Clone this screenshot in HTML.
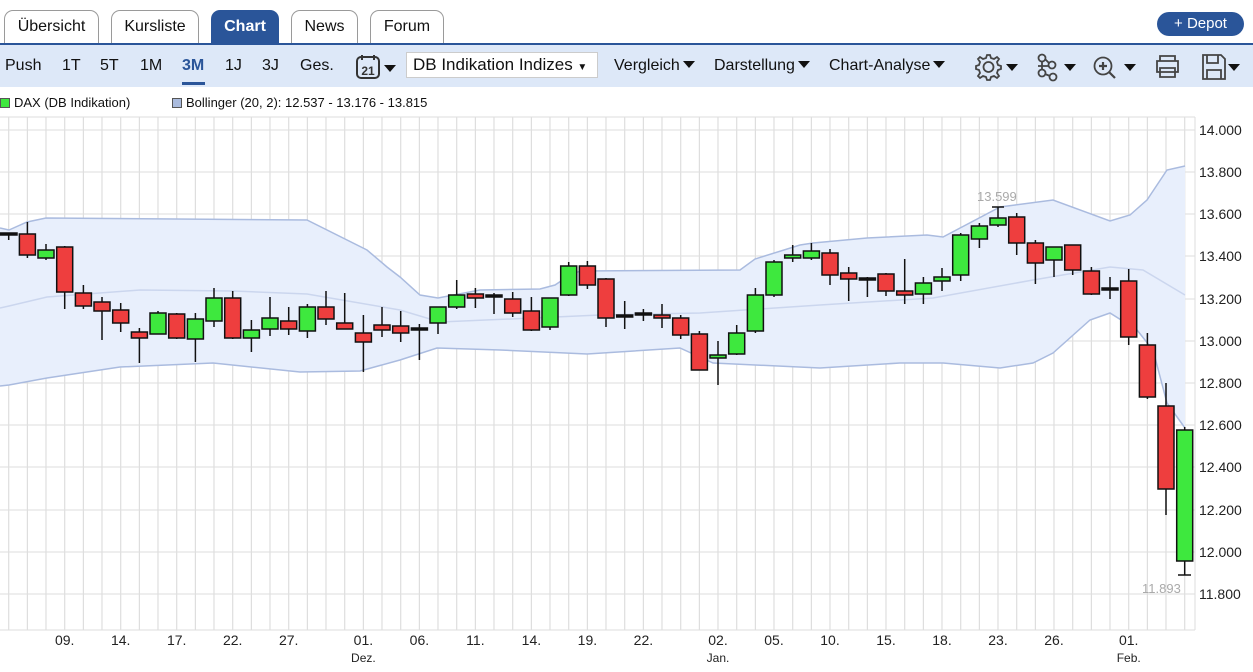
<!DOCTYPE html>
<html><head><meta charset="utf-8"><style>
*{margin:0;padding:0;box-sizing:border-box}
body{width:1253px;height:672px;background:#fff;font-family:"Liberation Sans",sans-serif;position:relative;overflow:hidden;color:#111}
.tab{position:absolute;top:10px;height:34px;border:1px solid #9a9a9a;border-bottom:none;border-radius:9px 9px 0 0;font-size:16px;text-align:center;line-height:32px;background:#fff}
.tab.on{background:#2a5599;color:#fff;font-weight:bold;border-color:#2a5599}
#bar{position:absolute;top:43px;left:0;width:1253px;height:44px;background:#dde8f8;border-top:2px solid #2a5599}
.t{position:absolute;top:12px;font-size:16px;color:#111}
.arr{display:inline-block;width:0;height:0;border-left:6px solid transparent;border-right:6px solid transparent;border-top:7px solid #111;margin-left:3px;vertical-align:2px}
#dep{position:absolute;left:1157px;top:12px;width:87px;height:24px;border-radius:12px;background:#2a5599;color:#fff;font-size:15px;text-align:center;line-height:24px}
.lg{position:absolute;top:95px;font-size:13px}
.sq{display:inline-block;width:10px;height:10px;border:1px solid #555;margin-right:4px;vertical-align:-1px}
</style></head><body>
<div class="tab" style="left:4px;width:95px">Übersicht</div>
<div class="tab" style="left:111px;width:88px">Kursliste</div>
<div class="tab on" style="left:211px;width:68px">Chart</div>
<div class="tab" style="left:291px;width:67px">News</div>
<div class="tab" style="left:370px;width:74px">Forum</div>
<div id="dep">+ Depot</div>
<div id="bar">
<span class="t" style="left:5px">Push</span>
<span class="t" style="left:62px">1T</span>
<span class="t" style="left:100px">5T</span>
<span class="t" style="left:140px">1M</span>
<span class="t" style="left:182px;color:#2a5599;font-weight:bold">3M</span>
<div style="position:absolute;left:182px;top:37px;width:23px;height:3px;background:#2a5599"></div>
<span class="t" style="left:225px">1J</span>
<span class="t" style="left:262px">3J</span>
<span class="t" style="left:300px">Ges.</span>
<svg style="position:absolute;left:355px;top:8px" width="42" height="28"><rect x="2" y="4" width="22" height="21" rx="4" fill="none" stroke="#333" stroke-width="2"/><line x1="7" y1="2" x2="7" y2="7" stroke="#333" stroke-width="2"/><line x1="19" y1="2" x2="19" y2="7" stroke="#333" stroke-width="2"/><text x="13" y="22" font-size="12" font-weight="bold" text-anchor="middle" font-family="Liberation Sans" fill="#333">21</text><path d="M29 12h12l-6 7z" fill="#111"/></svg>
<div style="position:absolute;left:406px;top:7px;width:192px;height:26px;background:#fff;border:1px solid #ccc;font-size:17px;line-height:24px;padding-left:6px">DB Indikation Indizes <span style="font-size:10px">&#9660;</span></div>
<span class="t" style="left:614px">Vergleich<span class="arr"></span></span>
<span class="t" style="left:714px">Darstellung<span class="arr"></span></span>
<span class="t" style="left:829px">Chart-Analyse<span class="arr"></span></span>
<svg style="position:absolute;left:970px;top:4px" width="280" height="34" fill="none" stroke="#444" stroke-width="1.8">
<path d="M17 6l3 0 1 3 3 1 3-2 2 2-2 3 1 3 3 1v3l-3 1-1 3 2 3-2 2-3-2-3 1-1 3h-3l-1-3-3-1-3 2-2-2 2-3-1-3-3-1v-3l3-1 1-3-2-3 2-2 3 2 3-1z"/><circle cx="18.5" cy="18" r="5"/>
<path d="M36 15h12l-6 7z" fill="#111" stroke="none"/>
<circle cx="72" cy="9" r="3.5"/><circle cx="82" cy="16" r="3.5"/><circle cx="72" cy="24" r="3.5"/><circle cx="83" cy="28" r="3.5"/><path d="M72 12v9M75 10l4 4M75 25l5 2M68 17h11"/>
<path d="M94 15h12l-6 7z" fill="#111" stroke="none"/>
<circle cx="133" cy="17" r="8.5"/><path d="M139 23l6 6M129 17h8M133 13v8" stroke-width="2.2"/>
<path d="M154 15h12l-6 7z" fill="#111" stroke="none"/>
<path d="M190 12v-5h15v5M187 12h21v11h-21zM190 19h15v9h-15z"/>
<path d="M233 6h18l4 4v20h-22zM237 6v8h11V6M237 30v-9h14v9"/>
<path d="M258 15h12l-6 7z" fill="#111" stroke="none"/>
</svg>
</div>
<div class="lg" style="left:0"><span class="sq" style="background:#3ee83e"></span>DAX (DB Indikation)</div>
<div class="lg" style="left:172px"><span class="sq" style="background:#aabbdd"></span>Bollinger (20, 2): 12.537 - 13.176 - 13.815</div>
<svg style="position:absolute;left:0;top:0" width="1253" height="672">
<g stroke="#dedede" stroke-width="1">
<line x1="0" y1="117" x2="1195" y2="117"/>
<line x1="0" y1="130" x2="1195" y2="130"/><line x1="0" y1="172" x2="1195" y2="172"/><line x1="0" y1="214" x2="1195" y2="214"/><line x1="0" y1="256" x2="1195" y2="256"/><line x1="0" y1="299" x2="1195" y2="299"/><line x1="0" y1="341" x2="1195" y2="341"/><line x1="0" y1="383" x2="1195" y2="383"/><line x1="0" y1="425" x2="1195" y2="425"/><line x1="0" y1="467" x2="1195" y2="467"/><line x1="0" y1="510" x2="1195" y2="510"/><line x1="0" y1="552" x2="1195" y2="552"/><line x1="0" y1="594" x2="1195" y2="594"/>
<line x1="0" y1="630" x2="1195" y2="630"/>
<line x1="1195" y1="117" x2="1195" y2="630"/>
</g>
<g stroke="#dedede" stroke-width="1.2">
<line x1="8.7" y1="117" x2="8.7" y2="630"/><line x1="27.4" y1="117" x2="27.4" y2="630"/><line x1="46" y1="117" x2="46" y2="630"/><line x1="64.7" y1="117" x2="64.7" y2="630"/><line x1="83.4" y1="117" x2="83.4" y2="630"/><line x1="102" y1="117" x2="102" y2="630"/><line x1="120.7" y1="117" x2="120.7" y2="630"/><line x1="139.4" y1="117" x2="139.4" y2="630"/><line x1="158" y1="117" x2="158" y2="630"/><line x1="176.7" y1="117" x2="176.7" y2="630"/><line x1="195.4" y1="117" x2="195.4" y2="630"/><line x1="214" y1="117" x2="214" y2="630"/><line x1="232.7" y1="117" x2="232.7" y2="630"/><line x1="251.4" y1="117" x2="251.4" y2="630"/><line x1="270" y1="117" x2="270" y2="630"/><line x1="288.7" y1="117" x2="288.7" y2="630"/><line x1="307.4" y1="117" x2="307.4" y2="630"/><line x1="326" y1="117" x2="326" y2="630"/><line x1="344.7" y1="117" x2="344.7" y2="630"/><line x1="363.4" y1="117" x2="363.4" y2="630"/><line x1="382" y1="117" x2="382" y2="630"/><line x1="400.7" y1="117" x2="400.7" y2="630"/><line x1="419.4" y1="117" x2="419.4" y2="630"/><line x1="438" y1="117" x2="438" y2="630"/><line x1="456.7" y1="117" x2="456.7" y2="630"/><line x1="475.4" y1="117" x2="475.4" y2="630"/><line x1="494" y1="117" x2="494" y2="630"/><line x1="512.7" y1="117" x2="512.7" y2="630"/><line x1="531.4" y1="117" x2="531.4" y2="630"/><line x1="550" y1="117" x2="550" y2="630"/><line x1="568.7" y1="117" x2="568.7" y2="630"/><line x1="587.4" y1="117" x2="587.4" y2="630"/><line x1="606" y1="117" x2="606" y2="630"/><line x1="624.7" y1="117" x2="624.7" y2="630"/><line x1="643.4" y1="117" x2="643.4" y2="630"/><line x1="662" y1="117" x2="662" y2="630"/><line x1="680.7" y1="117" x2="680.7" y2="630"/><line x1="699.4" y1="117" x2="699.4" y2="630"/><line x1="718" y1="117" x2="718" y2="630"/><line x1="736.7" y1="117" x2="736.7" y2="630"/><line x1="755.4" y1="117" x2="755.4" y2="630"/><line x1="774" y1="117" x2="774" y2="630"/><line x1="792.7" y1="117" x2="792.7" y2="630"/><line x1="811.4" y1="117" x2="811.4" y2="630"/><line x1="830" y1="117" x2="830" y2="630"/><line x1="848.7" y1="117" x2="848.7" y2="630"/><line x1="867.4" y1="117" x2="867.4" y2="630"/><line x1="886" y1="117" x2="886" y2="630"/><line x1="904.7" y1="117" x2="904.7" y2="630"/><line x1="923.4" y1="117" x2="923.4" y2="630"/><line x1="942" y1="117" x2="942" y2="630"/><line x1="960.7" y1="117" x2="960.7" y2="630"/><line x1="979.4" y1="117" x2="979.4" y2="630"/><line x1="998" y1="117" x2="998" y2="630"/><line x1="1016.7" y1="117" x2="1016.7" y2="630"/><line x1="1035.4" y1="117" x2="1035.4" y2="630"/><line x1="1054" y1="117" x2="1054" y2="630"/><line x1="1072.7" y1="117" x2="1072.7" y2="630"/><line x1="1091.4" y1="117" x2="1091.4" y2="630"/><line x1="1110" y1="117" x2="1110" y2="630"/><line x1="1128.7" y1="117" x2="1128.7" y2="630"/><line x1="1147.4" y1="117" x2="1147.4" y2="630"/><line x1="1166" y1="117" x2="1166" y2="630"/><line x1="1184.7" y1="117" x2="1184.7" y2="630"/>
</g>
<path d="M0 228 L9 230 L27 222 L46 218 L307 220 L367 250 L387 267 L400 277 L420 295 L438 298 L480 290 L540 289 L555 285 L567 277 L580 271 L740 270 L755 259 L800 245 L813 243 L867 238 L927 235 L943 237 L1000 207 L1053 200 L1110 221 L1130 215 L1147 200 L1167 170 L1185 166 L1185 428 L1167 403 L1153 350 L1137 330 L1110 313 L1090 320 L1053 353 L1033 363 L1000 368 L943 363 L900 363 L830 368 L820 368 L713 363 L680 348 L587 354 L500 350 L437 348 L400 360 L360 371 L300 372 L213 363 L120 367 L47 378 L9 385 L0 386 Z" fill="#e8effc" stroke="none"/>
<g fill="none" stroke="#aabbdf" stroke-width="1.5">
<path d="M0 228 L9 230 L27 222 L46 218 L307 220 L367 250 L387 267 L400 277 L420 295 L438 298 L480 290 L540 289 L555 285 L567 277 L580 271 L740 270 L755 259 L800 245 L813 243 L867 238 L927 235 L943 237 L1000 207 L1053 200 L1110 221 L1130 215 L1147 200 L1167 170 L1185 166"/>
<path d="M0 386 L9 385 L47 378 L120 367 L213 363 L300 372 L360 371 L400 360 L437 348 L500 350 L587 354 L680 348 L713 363 L820 368 L900 363 L943 363 L1000 368 L1033 363 L1053 353 L1090 320 L1110 313 L1137 330 L1153 350 L1167 403 L1185 428"/>
<path d="M0 308 L9 306 L47 297 L140 290 L233 291 L307 294 L400 310 L440 322 L533 318 L600 315 L700 313 L820 305 L933 298 L1033 280 L1110 267 L1143 270 L1185 295" stroke="#cbd6ee"/>
</g>
<g stroke="#111" stroke-width="1.5">
<line x1="8.7" y1="234" x2="8.7" y2="240"/><rect x="0" y="233" width="17" height="2" fill="#111"/>
<line x1="27.4" y1="222" x2="27.4" y2="258"/><rect x="19.4" y="234" width="16" height="21" fill="#ee3e3e"/>
<line x1="46" y1="244" x2="46" y2="260"/><rect x="38" y="250" width="16" height="8" fill="#3ee83e"/>
<line x1="64.7" y1="246" x2="64.7" y2="309"/><rect x="56.7" y="247" width="16" height="45" fill="#ee3e3e"/>
<line x1="83.4" y1="285" x2="83.4" y2="309"/><rect x="75.4" y="293" width="16" height="13" fill="#ee3e3e"/>
<line x1="102" y1="297" x2="102" y2="340"/><rect x="94" y="302" width="16" height="9" fill="#ee3e3e"/>
<line x1="120.7" y1="303" x2="120.7" y2="332"/><rect x="112.7" y="310" width="16" height="13" fill="#ee3e3e"/>
<line x1="139.4" y1="328" x2="139.4" y2="363"/><rect x="131.4" y="332" width="16" height="6" fill="#ee3e3e"/>
<line x1="158" y1="311" x2="158" y2="334"/><rect x="150" y="313" width="16" height="21" fill="#3ee83e"/>
<line x1="176.7" y1="313" x2="176.7" y2="339"/><rect x="168.7" y="314" width="16" height="24" fill="#ee3e3e"/>
<line x1="195.4" y1="313" x2="195.4" y2="362"/><rect x="187.4" y="319" width="16" height="20" fill="#3ee83e"/>
<line x1="214" y1="288" x2="214" y2="327"/><rect x="206" y="298" width="16" height="23" fill="#3ee83e"/>
<line x1="232.7" y1="291" x2="232.7" y2="339"/><rect x="224.7" y="298" width="16" height="40" fill="#ee3e3e"/>
<line x1="251.4" y1="320" x2="251.4" y2="352"/><rect x="243.4" y="330" width="16" height="8" fill="#3ee83e"/>
<line x1="270" y1="297" x2="270" y2="336"/><rect x="262" y="318" width="16" height="11" fill="#3ee83e"/>
<line x1="288.7" y1="307" x2="288.7" y2="335"/><rect x="280.7" y="321" width="16" height="8" fill="#ee3e3e"/>
<line x1="307.4" y1="304" x2="307.4" y2="338"/><rect x="299.4" y="307" width="16" height="24" fill="#3ee83e"/>
<line x1="326" y1="291" x2="326" y2="325"/><rect x="318" y="307" width="16" height="12" fill="#ee3e3e"/>
<line x1="344.7" y1="293" x2="344.7" y2="329"/><rect x="336.7" y="323" width="16" height="6" fill="#ee3e3e"/>
<line x1="363.4" y1="315" x2="363.4" y2="372"/><rect x="355.4" y="333" width="16" height="9" fill="#ee3e3e"/>
<line x1="382" y1="307" x2="382" y2="337"/><rect x="374" y="325" width="16" height="5" fill="#ee3e3e"/>
<line x1="400.7" y1="311" x2="400.7" y2="342"/><rect x="392.7" y="326" width="16" height="7" fill="#ee3e3e"/>
<line x1="419.4" y1="324" x2="419.4" y2="360"/><rect x="411.4" y="328" width="16" height="2" fill="#111"/>
<line x1="438" y1="307" x2="438" y2="334"/><rect x="430" y="307" width="16" height="16" fill="#3ee83e"/>
<line x1="456.7" y1="280" x2="456.7" y2="309"/><rect x="448.7" y="295" width="16" height="12" fill="#3ee83e"/>
<line x1="475.4" y1="288" x2="475.4" y2="308"/><rect x="467.4" y="294" width="16" height="4" fill="#ee3e3e"/>
<line x1="494" y1="293" x2="494" y2="314"/><rect x="486" y="295" width="16" height="2" fill="#111"/>
<line x1="512.7" y1="292" x2="512.7" y2="317"/><rect x="504.7" y="299" width="16" height="14" fill="#ee3e3e"/>
<line x1="531.4" y1="297" x2="531.4" y2="331"/><rect x="523.4" y="311" width="16" height="19" fill="#ee3e3e"/>
<line x1="550" y1="298" x2="550" y2="330"/><rect x="542" y="298" width="16" height="29" fill="#3ee83e"/>
<line x1="568.7" y1="262" x2="568.7" y2="296"/><rect x="560.7" y="266" width="16" height="29" fill="#3ee83e"/>
<line x1="587.4" y1="261" x2="587.4" y2="289"/><rect x="579.4" y="266" width="16" height="19" fill="#ee3e3e"/>
<line x1="606" y1="278" x2="606" y2="327"/><rect x="598" y="279" width="16" height="39" fill="#ee3e3e"/>
<line x1="624.7" y1="301" x2="624.7" y2="329"/><rect x="616.7" y="315" width="16" height="2" fill="#111"/>
<line x1="643.4" y1="309" x2="643.4" y2="321"/><rect x="635.4" y="313" width="16" height="2" fill="#111"/>
<line x1="662" y1="304" x2="662" y2="328"/><rect x="654" y="315" width="16" height="3" fill="#ee3e3e"/>
<line x1="680.7" y1="315" x2="680.7" y2="339"/><rect x="672.7" y="318" width="16" height="17" fill="#ee3e3e"/>
<line x1="699.4" y1="331" x2="699.4" y2="370"/><rect x="691.4" y="334" width="16" height="36" fill="#ee3e3e"/>
<line x1="718" y1="341" x2="718" y2="385"/><rect x="710" y="355" width="16" height="3" fill="#3ee83e"/>
<line x1="736.7" y1="325" x2="736.7" y2="355"/><rect x="728.7" y="333" width="16" height="21" fill="#3ee83e"/>
<line x1="755.4" y1="288" x2="755.4" y2="333"/><rect x="747.4" y="295" width="16" height="36" fill="#3ee83e"/>
<line x1="774" y1="260" x2="774" y2="297"/><rect x="766" y="262" width="16" height="33" fill="#3ee83e"/>
<line x1="792.7" y1="245" x2="792.7" y2="262"/><rect x="784.7" y="255" width="16" height="3" fill="#3ee83e"/>
<line x1="811.4" y1="243" x2="811.4" y2="260"/><rect x="803.4" y="251" width="16" height="7" fill="#3ee83e"/>
<line x1="830" y1="249" x2="830" y2="285"/><rect x="822" y="253" width="16" height="22" fill="#ee3e3e"/>
<line x1="848.7" y1="267" x2="848.7" y2="301"/><rect x="840.7" y="273" width="16" height="6" fill="#ee3e3e"/>
<line x1="867.4" y1="277" x2="867.4" y2="297"/><rect x="859.4" y="278" width="16" height="2" fill="#111"/>
<line x1="886" y1="273" x2="886" y2="296"/><rect x="878" y="274" width="16" height="17" fill="#ee3e3e"/>
<line x1="904.7" y1="259" x2="904.7" y2="304"/><rect x="896.7" y="291" width="16" height="4" fill="#ee3e3e"/>
<line x1="923.4" y1="277" x2="923.4" y2="304"/><rect x="915.4" y="283" width="16" height="11" fill="#3ee83e"/>
<line x1="942" y1="268" x2="942" y2="291"/><rect x="934" y="277" width="16" height="4" fill="#3ee83e"/>
<line x1="960.7" y1="233" x2="960.7" y2="281"/><rect x="952.7" y="235" width="16" height="40" fill="#3ee83e"/>
<line x1="979.4" y1="223" x2="979.4" y2="248"/><rect x="971.4" y="226" width="16" height="13" fill="#3ee83e"/>
<line x1="998" y1="207" x2="998" y2="227"/><line x1="992" y1="207" x2="1004" y2="207"/><rect x="990" y="218" width="16" height="7" fill="#3ee83e"/>
<line x1="1016.7" y1="213" x2="1016.7" y2="255"/><rect x="1008.7" y="217" width="16" height="26" fill="#ee3e3e"/>
<line x1="1035.4" y1="240" x2="1035.4" y2="284"/><rect x="1027.4" y="243" width="16" height="20" fill="#ee3e3e"/>
<line x1="1054" y1="247" x2="1054" y2="277"/><rect x="1046" y="247" width="16" height="13" fill="#3ee83e"/>
<line x1="1072.7" y1="245" x2="1072.7" y2="275"/><rect x="1064.7" y="245" width="16" height="25" fill="#ee3e3e"/>
<line x1="1091.4" y1="267" x2="1091.4" y2="295"/><rect x="1083.4" y="271" width="16" height="23" fill="#ee3e3e"/>
<line x1="1110" y1="277" x2="1110" y2="299"/><rect x="1102" y="288" width="16" height="2" fill="#111"/>
<line x1="1128.7" y1="269" x2="1128.7" y2="345"/><rect x="1120.7" y="281" width="16" height="56" fill="#ee3e3e"/>
<line x1="1147.4" y1="333" x2="1147.4" y2="399"/><rect x="1139.4" y="345" width="16" height="52" fill="#ee3e3e"/>
<line x1="1166" y1="383" x2="1166" y2="515"/><rect x="1158" y="406" width="16" height="83" fill="#ee3e3e"/>
<line x1="1184.7" y1="427" x2="1184.7" y2="575"/><line x1="1178" y1="575" x2="1191" y2="575"/><rect x="1176.7" y="430" width="16" height="131" fill="#3ee83e"/>
</g>
<g font-family="Liberation Sans" font-size="13" fill="#aaa">
<text x="977" y="201">13.599</text>
<text x="1142" y="593">11.893</text>
</g>
<g font-family="Liberation Sans" font-size="14" fill="#222">
<text x="1199" y="135">14.000</text><text x="1199" y="177">13.800</text><text x="1199" y="219">13.600</text><text x="1199" y="261">13.400</text><text x="1199" y="304">13.200</text><text x="1199" y="346">13.000</text><text x="1199" y="388">12.800</text><text x="1199" y="430">12.600</text><text x="1199" y="472">12.400</text><text x="1199" y="515">12.200</text><text x="1199" y="557">12.000</text><text x="1199" y="599">11.800</text>
</g>
<g font-family="Liberation Sans" font-size="14" fill="#222" text-anchor="middle">
<text x="64.7" y="645">09.</text><text x="120.7" y="645">14.</text><text x="176.7" y="645">17.</text><text x="232.7" y="645">22.</text><text x="288.7" y="645">27.</text><text x="363.4" y="645">01.</text><text x="419.4" y="645">06.</text><text x="475.4" y="645">11.</text><text x="531.4" y="645">14.</text><text x="587.4" y="645">19.</text><text x="643.4" y="645">22.</text><text x="718" y="645">02.</text><text x="774" y="645">05.</text><text x="830" y="645">10.</text><text x="886" y="645">15.</text><text x="942" y="645">18.</text><text x="998" y="645">23.</text><text x="1054" y="645">26.</text><text x="1128.7" y="645">01.</text>
</g>
<g font-family="Liberation Sans" font-size="12" fill="#222" text-anchor="middle">
<text x="363.4" y="662">Dez.</text><text x="718" y="662">Jan.</text><text x="1128.7" y="662">Feb.</text>
</g>
</svg>
</body></html>
